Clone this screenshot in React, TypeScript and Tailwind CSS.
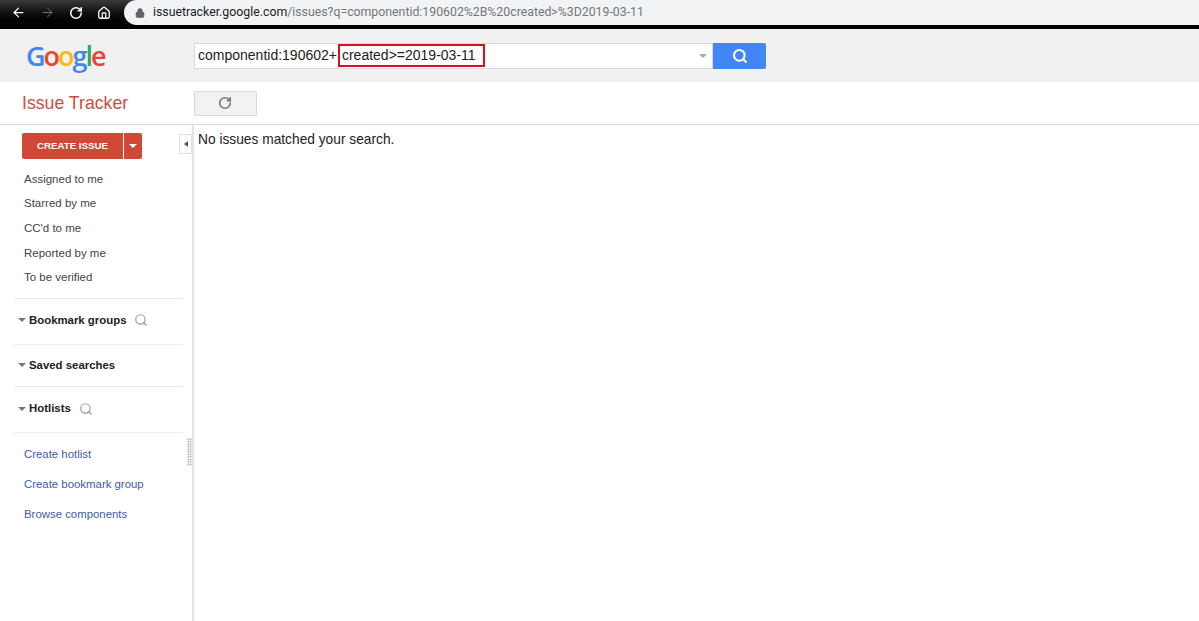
import { ArrowLeft, ArrowRight, RotateCw, Home, Lock, Search } from 'lucide-react';

const navItems = ['Assigned to me', 'Starred by me', "CC'd to me", 'Reported by me', 'To be verified'];
const links = ['Create hotlist', 'Create bookmark group', 'Browse components'];

function Caret({ className }: { className: string }) {
  return <span className={`inline-block w-0 h-0 border-x-[4px] border-x-transparent border-t-[4px] ${className}`} />;
}

export default function App() {
  return (
    <div className="w-[1199px] h-[621px] overflow-hidden bg-white flex flex-col font-['Liberation_Sans',Arial,sans-serif]">
      {/* browser chrome */}
      <div className="h-[29px] shrink-0 bg-gradient-to-b from-[#3a3a3a] via-[#0c0c0c] to-black flex items-start">
        <div className="w-[124px] h-[25px] shrink-0 flex items-center pl-[11px] gap-[14px]">
          <ArrowLeft size={15} strokeWidth={2} className="text-white" />
          <ArrowRight size={15} strokeWidth={1.5} className="text-[#7a7a7a]" />
          <RotateCw size={14} strokeWidth={2.6} className="text-white" />
          <Home size={14} strokeWidth={2.2} className="text-white" />
        </div>
        <div className="flex-1 h-[25px] bg-[#f1f3f4] rounded-l-[13px] flex items-center pl-[11px]">
          <Lock size={10} strokeWidth={2.5} className="text-[#5f6368] fill-[#5f6368]" />
          <span className="ml-[8px] text-[12.3px] text-[#202124] font-['Roboto',sans-serif]">
            issuetracker.google.com
            <span className="text-[#73777b]">/issues?q=componentid:190602%2B%20created&gt;%3D2019-03-11</span>
          </span>
        </div>
      </div>

      {/* search header */}
      <div className="h-[53px] shrink-0 bg-[#f1f1f1] flex items-center">
        <div className="w-[193px] shrink-0 pl-[26px] pb-[1px] text-[27px] font-semibold leading-none tracking-[-2px] font-['Open_Sans',sans-serif]">
          <span className="text-[#4285f4]">G</span>
          <span className="text-[#ea4335]">o</span>
          <span className="text-[#fbbc05]">o</span>
          <span className="text-[#4285f4]">g</span>
          <span className="text-[#34a853]">l</span>
          <span className="text-[#ea4335]">e</span>
        </div>
        <div className="w-[519px] h-[26px] ml-[1px] bg-white border border-[#d9d9d9] flex items-center text-[14px] text-[#222]">
          <span className="pl-[3px]">componentid:190602+</span>
          <span className="relative z-10 ml-[1px] h-[23px] w-[147px] border-[2.5px] border-[#d8101f] flex items-center pl-[2px]">
            created&gt;=2019-03-11
          </span>
          <Caret className="border-t-[#a8a8a8] ml-auto mr-[5px]" />
        </div>
        <div className="w-[53px] h-[26px] bg-[#4285f4] rounded-r-[2px] flex items-center justify-center">
          <Search size={16} strokeWidth={3} className="text-white" />
        </div>
      </div>

      {/* title row */}
      <div className="h-[43px] shrink-0 bg-white border-b border-[#dcdcdc] flex items-center">
        <div className="w-[194px] shrink-0 pl-[22px] text-[17.7px] text-[#c9503f]">Issue Tracker</div>
        <div className="w-[63px] h-[25px] bg-[#f2f2f2] border border-[#d9d9d9] rounded-[2px] flex items-center justify-center pr-[2px]">
          <RotateCw size={14} strokeWidth={2.8} className="text-[#777]" />
        </div>
      </div>

      <div className="flex-1 flex min-h-0">
        {/* sidebar */}
        <div className="relative w-[194px] shrink-0 border-r-2 border-[#e4e4e4] pt-[8px]">
          <div className="flex ml-[22px] h-[26px] text-white">
            <div className="w-[101px] bg-[#d14836] rounded-l-[2px] flex items-center justify-center text-[9.7px] font-bold">
              CREATE ISSUE
            </div>
            <div className="w-[18px] ml-[1px] bg-[#d14836] rounded-r-[2px] flex items-center justify-center">
              <Caret className="border-t-white" />
            </div>
          </div>

          <div className="mt-[8px] ml-[24px] flex flex-col text-[11.5px] text-[#444]">
            {navItems.map((item) => (
              <div key={item} className="h-[24.7px] flex items-center">{item}</div>
            ))}
          </div>

          <div className="mx-[14px] mt-[8px] mr-[9px] border-t border-[#ebebeb] h-[46px] pb-[3px] flex items-center text-[11.4px] font-bold text-[#222] pl-[4px]">
            <Caret className="border-t-[#777] mr-[3px]" />
            Bookmark groups
            <Search size={14} strokeWidth={2} className="text-[#999] ml-[8px]" />
          </div>
          <div className="mx-[14px] mr-[9px] border-t border-[#ebebeb] h-[42px] pb-[1px] flex items-center text-[11.4px] font-bold text-[#222] pl-[4px]">
            <Caret className="border-t-[#777] mr-[3px]" />
            Saved searches
          </div>
          <div className="mx-[14px] mr-[9px] border-y border-[#ebebeb] h-[47px] pb-[2px] flex items-center text-[11.4px] font-bold text-[#222] pl-[4px]">
            <Caret className="border-t-[#777] mr-[3px]" />
            Hotlists
            <Search size={14} strokeWidth={2} className="text-[#999] ml-[8px]" />
          </div>

          <div className="mt-[6px] ml-[24px] flex flex-col text-[11.4px] text-[#3b5ea8]">
            {links.map((item) => (
              <div key={item} className="h-[30px] flex items-center">{item}</div>
            ))}
          </div>

          {/* collapse tab */}
          <div className="absolute right-0 top-[9px] w-[13px] h-[20px] bg-white border border-[#e0e0e0] flex items-center justify-center">
            <span className="w-0 h-0 border-y-[3px] border-y-transparent border-r-[4px] border-r-[#555]" />
          </div>
          {/* resize grip */}
          <div className="absolute right-0 top-[313px] w-[5px] h-[28px] bg-[radial-gradient(#c4c4c4_1px,transparent_1px)] bg-[length:2.5px_2.5px]" />
        </div>

        {/* results */}
        <div className="flex-1 pl-[4px] pt-[6px] text-[13.75px] leading-[17px] text-[#222]">No issues matched your search.</div>
      </div>
    </div>
  );
}
